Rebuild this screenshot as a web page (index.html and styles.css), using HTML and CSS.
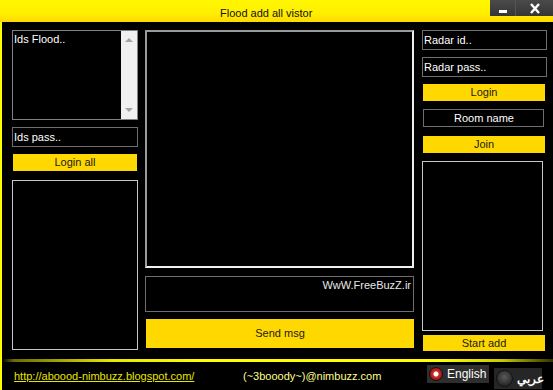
FILE: index.html
```html
<!DOCTYPE html>
<html lang="en">
<head>
    <meta charset="UTF-8">
    <title>Flood add all vistor</title>
    <link rel="stylesheet" href="styles.css">
</head>
<body>
    <div class="window">
        <div class="titlebar">
            <span class="title">Flood add all vistor</span>
            <div class="win-buttons">
                <button class="win-btn min"><span class="min-bar"></span></button>
                <button class="win-btn close">
                    <svg width="12" height="11" viewBox="0 0 12 11"><path d="M2 1 L10 10 M10 1 L2 10" stroke="#fff" stroke-width="2.4"/></svg>
                </button>
            </div>
        </div>

        <div class="body">
            <div class="main">
                <div class="col left">
                    <div class="listbox ids">
                        <div class="list-text">Ids Flood..</div>
                        <div class="scrollbar">
                            <span class="arrow up"></span>
                            <span class="arrow down"></span>
                        </div>
                    </div>
                    <div class="field ids-pass">Ids pass..</div>
                    <button class="ybtn login-all">Login all</button>
                    <div class="listbox plain left-list"></div>
                </div>

                <div class="col center">
                    <div class="chat"></div>
                    <div class="msg">WwW.FreeBuzZ.ir</div>
                    <button class="ybtn send">Send msg</button>
                </div>

                <div class="col right">
                    <div class="field">Radar id..</div>
                    <div class="field second">Radar pass..</div>
                    <button class="ybtn r-login">Login</button>
                    <div class="field room">Room name</div>
                    <button class="ybtn join">Join</button>
                    <div class="listbox plain right-list"></div>
                    <button class="ybtn start">Start add</button>
                </div>
            </div>

            <div class="separator"></div>

            <div class="footer">
                <a class="link" href="#">http://aboood-nimbuzz.blogspot.com/</a>
                <span class="mail">(~3booody~)@nimbuzz.com</span>
                <div class="langs">
                    <div class="lang on"><span class="radio"></span>English</div>
                    <div class="lang ar"><span class="radio"></span><span dir="rtl">عربي</span></div>
                </div>
            </div>
        </div>
    </div>
</body>
</html>
```

FILE: styles.css
```css
body {
    margin: 0;
    padding: 0;
    background-color: #000;
    font-family: 'Liberation Sans', Arial, sans-serif;
    font-size: 11px;
    color: #fff;
}
.window {
    width: 553px;
    height: 390px;
    overflow: hidden;
    background-color: #000;
}
.titlebar {
    height: 22px;
    display: flex;
    align-items: flex-start;
    background: linear-gradient(#fff700, #ffef00 60%, #ffd900);
}
.title {
    flex: 1;
    padding-left: 220px;
    line-height: 26px;
    font-size: 11px;
    color: #111;
}
.win-buttons {
    display: flex;
    gap: 1px;
    height: 16px;
    background-color: #555;
}
.win-btn {
    border: none;
    padding: 0;
    margin: 0;
    height: 16px;
    background: linear-gradient(#4a4a4a, #363636);
    display: flex;
    align-items: center;
    justify-content: center;
}
.win-btn.min {
    width: 25px;
    align-items: flex-end;
    padding-bottom: 3px;
}
.min-bar {
    display: block;
    width: 8px;
    height: 3px;
    background-color: #fff;
}
.win-btn.close {
    width: 37px;
}
.body {
    height: 368px;
    border-left: 2px solid #ffff00;
}
.main {
    display: flex;
    padding: 8px 0 0 10px;
    gap: 7px;
    height: 321px;
}
.col {
    display: flex;
    flex-direction: column;
}
.left {
    width: 126px;
}
.center {
    width: 269px;
}
.right {
    width: 125px;
    margin-left: 1px;
}
.listbox {
    box-sizing: border-box;
    border: 1px solid #828282;
    background-color: #000;
}
.listbox.ids {
    height: 90px;
    display: flex;
}
.list-text {
    flex: 1;
    padding: 2px 0 0 1px;
}
.scrollbar {
    width: 16px;
    background-color: #f0f0f0;
    position: relative;
}
.arrow {
    position: absolute;
    left: 4px;
    width: 0;
    height: 0;
    border-left: 4px solid transparent;
    border-right: 4px solid transparent;
}
.arrow.up {
    top: 7px;
    border-bottom: 4px solid #a3a3a3;
}
.arrow.down {
    bottom: 7px;
    border-top: 4px solid #a3a3a3;
}
.listbox.plain {
    border-color: #c8c8c8;
}
.field {
    box-sizing: border-box;
    height: 20px;
    border: 1px solid #6e6e6e;
    padding-left: 1px;
    line-height: 18px;
    color: #fff;
}
.ids-pass {
    margin-top: 7px;
}
.ybtn {
    box-sizing: border-box;
    border: none;
    padding: 0;
    background-color: #ffd800;
    color: #1a1a1a;
    font-family: 'Liberation Sans', Arial, sans-serif;
    font-size: 11px;
    height: 17px;
    line-height: 17px;
}
.login-all {
    margin: 7px 1px 0;
}
.left-list {
    margin-top: 9px;
    height: 170px;
}
.chat {
    box-sizing: border-box;
    height: 238px;
    border: 2px solid;
    border-color: #9a9a9a #f0f0f0 #f0f0f0 #9a9a9a;
}
.msg {
    box-sizing: border-box;
    margin-top: 8px;
    height: 36px;
    border: 1px solid #6e6e6e;
    text-align: right;
    padding: 2px 2px 0 0;
    color: #e8e8e8;
}
.send {
    margin: 7px 0 0 1px;
    height: 29px;
}
.right .second {
    margin-top: 7px;
}
.r-login {
    margin: 7px 2px 0 1px;
}
.room {
    margin: 8px 3px 0 1px;
    height: 18px;
    line-height: 16px;
    text-align: center;
}
.join {
    margin: 9px 2px 0 1px;
}
.right-list {
    margin: 8px 4px 0 0;
    height: 170px;
}
.start {
    margin: 4px 2px 0 1px;
    height: 16px;
    line-height: 16px;
}
.separator {
    height: 3px;
    margin-top: 8px;
    background: linear-gradient(to right, #000 0px, #6b6b00 12px, #e8e800 110px, #ffff00 200px, #ffff00 440px, #c8c800 500px, #333300 551px);
}
.footer {
    display: flex;
    align-items: center;
    height: 28px;
    padding-left: 12px;
}
.link {
    color: #e6e600;
    text-decoration: underline;
    width: 229px;
}
.mail {
    color: #ffff8a;
    width: 184px;
}
.langs {
    display: flex;
    gap: 5px;
    margin-top: 2px;
}
.lang {
    box-sizing: border-box;
    display: flex;
    align-items: center;
    gap: 4px;
    height: 18px;
    padding: 0 2px;
    background-color: #2e2e2e;
    color: #fff;
    font-size: 12px;
    white-space: nowrap;
}
.lang.on {
    width: 62px;
}
.lang.ar {
    height: 21px;
    width: 48px;
    background-color: #262626;
    margin-top: 3px;
    font-weight: bold;
}
.radio {
    flex: none;
    box-sizing: border-box;
    width: 14px;
    height: 14px;
    border-radius: 50%;
    background: radial-gradient(circle at 50% 40%, #5a5a5a, #151515);
    border: 1px solid #111;
}
.lang.on .radio {
    background: radial-gradient(circle, #fff 0 2px, #d02a2a 3px, #8a1010 7px);
}
.lang.ar .radio {
    width: 17px;
    height: 17px;
}
```
